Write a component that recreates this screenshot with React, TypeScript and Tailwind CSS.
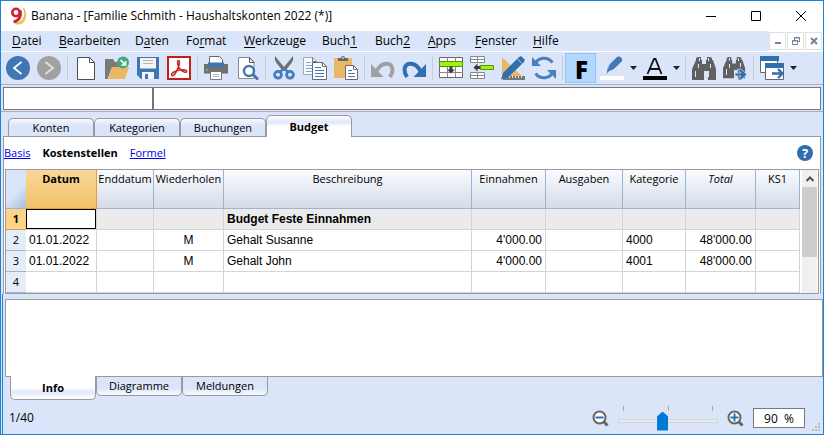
import type { ReactNode } from 'react';

const uiFont = "font-['Open_Sans','Noto_Sans',sans-serif]";
const gridFont = "font-['Liberation_Sans',Arial,sans-serif]";

/* ---------- toolbar icons, all on a 24 unit grid ---------- */

function Svg({ children }: { children: ReactNode }) {
  return (
    <svg width="24" height="24" viewBox="0 0 24 24" fill="none" aria-hidden="true" className="block shrink-0">
      {children}
    </svg>
  );
}

const BackIcon = () => (
  <Svg>
    <circle cx="12" cy="12" r="12" fill="#4076b3" />
    <path d="M15.500 6 8 12l7.500 6" stroke="#fff" strokeWidth="1.8" />
  </Svg>
);
const ForwardIcon = () => (
  <Svg>
    <circle cx="12" cy="12" r="12" fill="#a1a1a1" />
    <path d="M8.500 6 16 12l-7.500 6" stroke="#e3e3e3" strokeWidth="1.8" />
  </Svg>
);
const NewIcon = () => (
  <Svg>
    <path d="M3.500 1.500h12l5 5v17h-17z" fill="#fff" stroke="#4f4f4f" />
    <path d="M15.500 1.500v5h5" stroke="#4f4f4f" />
  </Svg>
);
const OpenIcon = () => (
  <Svg>
    <path d="M0 3h8l2 3h8v5H7L2.500 23H0z" fill="#7a7a7a" />
    <path d="M7 11h17l-4 12H3z" fill="#eab765" />
    <circle cx="18" cy="6.500" r="6" fill="#45a87d" />
    <path d="m15.500 4 4.500 4.500M20.500 5v4h-4" stroke="#fff" strokeWidth="1.7" />
  </Svg>
);
const SaveIcon = () => (
  <Svg>
    <path d="M1 1h22v22H5l-4-4z" fill="#4176b4" />
    <path d="M4 2h16v10.500H4z" fill="#f4f4f4" />
    <path d="M7 4.500h10M7 7.500h10" stroke="#b5b5b5" />
    <path d="M6 16h12v7H6z" fill="#f4f4f4" />
    <path d="M9 18h3v5H9z" fill="#4176b4" />
  </Svg>
);
const PdfIcon = () => (
  <Svg>
    <path d="M1 1h22v22H1z" fill="#fff" stroke="#c21f17" strokeWidth="2" />
    <path
      d="M5 19.500c-1.500-1 .5-3 3.500-4.200C11 14.200 15.500 13.500 18 14c2.500.5 2 2.500.2 2.200C14.500 15.600 11.800 12 11 9c-.7-2.600-.6-4.500.5-4.500s1.300 2 .5 4.700C11 12.800 7.500 20.700 5 19.500z"
      stroke="#c8241c"
      strokeWidth="1.5"
    />
  </Svg>
);
const PrintIcon = () => (
  <Svg>
    <path d="M0 8h24v9.500H0z" fill="#707070" />
    <path d="M5.500.5h10l3 3V8h-13z" fill="#fff" stroke="#666" />
    <path d="M4 6.500h16V11H4z" fill="#3f76b3" />
    <path d="M2 14h1.500" stroke="#ddd" />
    <path d="M6.500 15.500h11v8h-11z" fill="#fff" stroke="#777" />
    <path d="M9 18.500h6M9 20.500h6" stroke="#9cb9dc" />
  </Svg>
);
const PreviewIcon = () => (
  <Svg>
    <path d="M3.500 1.500h11l4.500 5v16H3.500z" fill="#fff" stroke="#8a8a8a" />
    <path d="M14.500 1.500v5H19z" fill="#fff" stroke="#555" />
    <circle cx="14" cy="15" r="5" fill="#fff" stroke="#4076b3" strokeWidth="2.4" />
    <path d="m18 18.500 5 5" stroke="#4076b3" strokeWidth="3" />
  </Svg>
);
const CutIcon = () => (
  <Svg>
    <path d="M3 0c-.5 3 0 5 1.500 7l6 7.500h3l6-7.500C21 5 21.500 3 21 0l-9 11z" fill="#707070" />
    <circle cx="6" cy="18.800" r="3.400" stroke="#3f7cc0" strokeWidth="2.8" />
    <circle cx="18" cy="18.800" r="3.400" stroke="#3f7cc0" strokeWidth="2.8" />
    <path d="M8 15.500 12 13l4 2.500" stroke="#3f7cc0" strokeWidth="2.5" />
  </Svg>
);
const CopyIcon = () => (
  <Svg>
    <path d="M.5 1.500h9l4 4v13H.5z" fill="#f7faff" stroke="#a9a9a9" />
    <path d="M9.500 1.500v4h4" stroke="#777" />
    <path d="M3 6.500h5M3 9.500h6M3 12.500h6M3 15.500h6" stroke="#7ea5d3" />
    <path d="M9.500 6.500h10l4 4v13h-14z" fill="#fff" stroke="#6b6b6b" />
    <path d="M19.500 6.500v4h4" stroke="#6b6b6b" />
    <path d="M12 11.500h6M12 14.500h9M12 17.500h9M12 20.500h9" stroke="#3f76b3" />
  </Svg>
);
const PasteIcon = () => (
  <Svg>
    <path d="M0 2h18v20H0z" fill="#eab765" />
    <path d="M4 2h3a2 2 0 0 1 4 0h3v3H4z" fill="#666" />
    <path d="M8 1.500h2v1H8z" fill="#fff" />
    <path d="M11.500 9.500h8l4 4v10h-12z" fill="#fff" stroke="#6b6b6b" />
    <path d="M19.500 9.500v4h4" stroke="#6b6b6b" />
    <path d="M14 14.500h4M14 17.500h7M14 20.500h7" stroke="#3f76b3" />
  </Svg>
);
const UndoIcon = () => (
  <Svg>
    <path d="M0 8v13h12.500z" fill="#a1a1a1" />
    <path d="M5 16C8 10 12 7.500 16 7.700c6 .3 7 7.300 3 13.300" stroke="#a1a1a1" strokeWidth="4" />
  </Svg>
);
const RedoIcon = () => (
  <Svg>
    <path d="M24 8v13H11.500z" fill="#2f6fb0" />
    <path d="M19 16C16 10 12 7.500 8 7.700c-6 .3-7 7.300-3 13.300" stroke="#2f6fb0" strokeWidth="4" />
  </Svg>
);
const AddRowIcon = () => (
  <Svg>
    <path d="M.5 1.500h23v20H.5z" fill="#fff" stroke="#666" />
    <path d="M8.500 1v20M16.500 1v20M0 16.500h24" stroke="#888" />
    <path d="M.5 5.500h23v5H.5z" fill="#9df50d" stroke="#5b8f0c" />
    <path d="M10.500 10.500h3v3H16l-4 4-4-4h2.500z" fill="#3c3c3c" />
  </Svg>
);
const InsertRowIcon = () => (
  <Svg>
    <path d="M.5.5h14v6H.5zM.5 16.500h14v6H.5z" fill="#fff" stroke="#888" />
    <path d="M7.500.5v6M0 3.500h15M7.500 16.500v6M0 19.500h15" stroke="#888" />
    <path d="M10.500 9.500h13v4h-13z" fill="#9df50d" stroke="#5b8f0c" />
    <path d="M10 10v3H7.500v2.500l-4-4 4-4V10z" fill="#3c3c3c" />
  </Svg>
);
const DesignIcon = () => (
  <Svg>
    <path d="M1 1v21h22z" fill="#eab765" />
    <path d="M6 12v5.500h6z" fill="#dbe5f9" />
    <path d="M2 20h22v4H2z" fill="#777" />
    <path d="M5.500 20v2M8.500 20v2M11.500 20v2M14.500 20v2M17.500 20v2M20.500 20v2" stroke="#dbe5f9" />
    <path d="M0 23.500 2 17 17.500 1.500 20 0l4 4-1.500 2.500L7 21.500z" fill="#2f6fb0" />
    <path d="m16.500 3 4.500 4.500" stroke="#dbe5f9" strokeWidth=".8" />
  </Svg>
);
const RefreshIcon = () => (
  <Svg>
    <path d="M3 9C5 1.500 15-.5 20.500 6.500" stroke="#4a80bc" strokeWidth="3" />
    <path d="M0 1v9h9z" fill="#4a80bc" />
    <path d="M21 15c-2 7.500-12 9.500-17.500 2.500" stroke="#4a80bc" strokeWidth="3" />
    <path d="M24 23v-9h-9z" fill="#4a80bc" />
  </Svg>
);
const PenIcon = () => (
  <Svg>
    <path d="M7 17c0-4 1-7 3-9l7-7c3-1.500 6 1 5 4l-7 7c-2 2-4 2-6 3z" fill="#4179b7" />
    <path d="M14 3.500 9.500 8l-2 5" stroke="#a8c3e2" />
    <path d="m6.500 17.500 3-3" stroke="#8a8a8a" />
    <path d="M0 20h24v4H0z" fill="#fff" />
  </Svg>
);
const ColorIcon = () => (
  <Svg>
    <path d="M4.500 18 11 3h1.500L18.500 18M7 13h9.500" stroke="#111" strokeWidth="1.8" />
    <path d="M0 20h24v4H0z" fill="#000" />
  </Svg>
);
const binoculars = 'M4 3V1l2-1h3v3h1v4h4V3h1V0h3l2 1v2h1l3 9v11h-8v-9h-4v9H0V12z';
const FindIcon = () => (
  <Svg>
    <path d={binoculars} fill="#606060" transform="translate(0 1)" />
    <path d="M7.500 2v3M16.500 2v3M3.500 15v6M16.500 15v6M6.500 8v4M18.500 8v4" stroke="#dbe5f9" />
  </Svg>
);
const FindNextIcon = () => (
  <Svg>
    <path d={binoculars} fill="#606060" transform="translate(0 1) scale(.92)" />
    <path d="M6.500 2v3M15.500 2v3M3.500 13v6M6.500 8v4M17.500 7v4" stroke="#dbe5f9" />
    <path d="M12 17h6l-3.500-4H18l6 5.500-6 5.500h-3.500l3.500-4h-6z" fill="#2f6fb0" stroke="#dbe5f9" strokeWidth=".7" />
  </Svg>
);
const WindowsIcon = () => (
  <Svg>
    <path d="M.5.5h17v16H.5z" fill="#fff" stroke="#666" />
    <path d="M0 0h19v5H0z" fill="#2f6fb0" />
    <path d="M5.500 7.500h18v16h-18z" fill="#fff" stroke="#666" />
    <path d="M5 7h19v5H5z" fill="#2f6fb0" />
    <path d="M12 17.500h10M18 13l4.500 4.500L18 22" stroke="#2f6fb0" strokeWidth="2.4" />
  </Svg>
);
const Magnifier = ({ plus = false }: { plus?: boolean }) => (
  <svg width="17" height="17" viewBox="0 0 17 17" fill="none" aria-hidden="true" className="block">
    <circle cx="7.500" cy="7.500" r="6" fill="#fff" stroke="#666" strokeWidth="2" />
    <path d="m11.500 11.500 4 4" stroke="#666" strokeWidth="3" />
    <path d={plus ? 'M3.500 7.500h8M7.500 3.500v8' : 'M3.500 7.500h8'} stroke="#2f6fb0" strokeWidth="2" />
  </svg>
);

/* ---------- toolbar ---------- */

function Tool({ label, children }: { label: string; children: ReactNode }) {
  return (
    <button type="button" aria-label={label} className="flex h-full w-[31px] items-center justify-center">
      {children}
    </button>
  );
}

function MenuTool({ label, children }: { label: string; children: ReactNode }) {
  return (
    <button type="button" aria-label={label} className="flex h-full w-[43px] items-center gap-1.5 pl-1">
      {children}
      <svg width="7" height="4" viewBox="0 0 7 4" aria-hidden="true">
        <path d="M0 0h7L3.500 4z" fill="#222" />
      </svg>
    </button>
  );
}

const Separator = () => (
  <div className="flex w-1.5 justify-center py-1">
    <div className="w-px bg-[#c8ccd4]" />
  </div>
);

function Toolbar() {
  return (
    <div className="flex h-[33px] items-stretch border-t border-white px-px">
      <Tool label="Zurück"><BackIcon /></Tool>
      <Tool label="Vorwärts"><ForwardIcon /></Tool>
      <Separator />
      <Tool label="Neu"><NewIcon /></Tool>
      <Tool label="Öffnen"><OpenIcon /></Tool>
      <Tool label="Speichern"><SaveIcon /></Tool>
      <Tool label="PDF"><PdfIcon /></Tool>
      <Separator />
      <Tool label="Drucken"><PrintIcon /></Tool>
      <Tool label="Seitenansicht"><PreviewIcon /></Tool>
      <Separator />
      <Tool label="Ausschneiden"><CutIcon /></Tool>
      <Tool label="Kopieren"><CopyIcon /></Tool>
      <Tool label="Einfügen"><PasteIcon /></Tool>
      <Separator />
      <Tool label="Rückgängig"><UndoIcon /></Tool>
      <Tool label="Wiederherstellen"><RedoIcon /></Tool>
      <Separator />
      <Tool label="Zeilen hinzufügen"><AddRowIcon /></Tool>
      <Tool label="Zeilen einfügen"><InsertRowIcon /></Tool>
      <Tool label="Spalten einrichten"><DesignIcon /></Tool>
      <Tool label="Neu berechnen"><RefreshIcon /></Tool>
      <Separator />
      <button
        type="button"
        aria-pressed="true"
        className="my-px flex w-[31px] items-center justify-center border border-[#8ac6fb] bg-[#b3d7fd] pt-1 pl-0.5 font-['Open_Sans',sans-serif] text-[24px] leading-none font-extrabold text-black"
      >
        F
      </button>
      <MenuTool label="Hintergrundfarbe"><PenIcon /></MenuTool>
      <MenuTool label="Textfarbe"><ColorIcon /></MenuTool>
      <Separator />
      <Tool label="Suchen"><FindIcon /></Tool>
      <Tool label="Weitersuchen"><FindNextIcon /></Tool>
      <Separator />
      <MenuTool label="Fenster"><WindowsIcon /></MenuTool>
    </div>
  );
}

/* ---------- title and menu ---------- */

function TitleBar() {
  const control = 'flex h-full w-[45px] items-center justify-center';
  return (
    <header className="flex h-[30px] items-center bg-white pl-[9px]">
      <svg width="16" height="18" viewBox="0 0 16 18" fill="none" aria-hidden="true">
        <path d="M13.500 1c3 6 1 13-8 15.500 3 1.500 8 .5 9.500-4.500 1-4 .5-8-1.500-11z" fill="#f3d548" stroke="#c9a53a" strokeWidth=".6" />
        <circle cx="6" cy="5.500" r="3.700" stroke="#cf1f33" strokeWidth="2.6" />
        <path d="M10.300 3.500c1 5-.5 10-6.800 11.500" stroke="#cf1f33" strokeWidth="2.8" />
      </svg>
      <h1 className="flex-1 pl-[5px] text-[12px] leading-4 text-black">
        Banana - [Familie Schmith - Haushaltskonten 2022 (*)]
      </h1>
      <button type="button" aria-label="Minimieren" className={control}>
        <svg width="10" height="10" viewBox="0 0 10 10"><path d="M0 5.500h10" stroke="#000" /></svg>
      </button>
      <button type="button" aria-label="Maximieren" className={control}>
        <svg width="10" height="10" viewBox="0 0 10 10" fill="none"><path d="M.5.5h9v9h-9z" stroke="#000" /></svg>
      </button>
      <button type="button" aria-label="Schliessen" className={control}>
        <svg width="10" height="10" viewBox="0 0 10 10"><path d="m0 0 10 10M10 0 0 10" stroke="#000" /></svg>
      </button>
    </header>
  );
}

const menus: [string, string, string][] = [
  ['', 'D', 'atei'],
  ['', 'B', 'earbeiten'],
  ['D', 'a', 'ten'],
  ['Fo', 'r', 'mat'],
  ['', 'W', 'erkzeuge'],
  ['Buch', '1', ''],
  ['Buch', '2', ''],
  ['', 'A', 'pps'],
  ['', 'F', 'enster'],
  ['', 'H', 'ilfe'],
];

function MenuBar() {
  const mdi = 'flex h-[18px] w-[17px] items-center justify-center border border-[#e0e0e0] bg-white';
  return (
    <nav className="flex h-5 items-center">
      <div className="grid flex-1 grid-cols-[47px_76px_51px_58px_78px_53px_53px_47px_58px_40px] pl-[11px]">
        {menus.map(([before, key, after]) => (
          <button key={before + key + after} type="button" className="text-left text-[12px] leading-4 whitespace-nowrap">
            {before}
            <span className="underline underline-offset-2">{key}</span>
            {after}
          </button>
        ))}
      </div>
      <div className="flex h-full items-center gap-px bg-white pr-px">
        <button type="button" aria-label="Dokument minimieren" className={mdi}>
          <svg width="8" height="8" viewBox="0 0 8 8"><path d="M1 6h6" stroke="#758494" strokeWidth="2" /></svg>
        </button>
        <button type="button" aria-label="Dokument wiederherstellen" className={mdi}>
          <svg width="8" height="8" viewBox="0 0 8 8" fill="none" stroke="#758494">
            <path d="M.5 3.500h5v4h-5zM0 4h6M2.500 3V.5h5v4H6M2 1h6" />
          </svg>
        </button>
        <button type="button" aria-label="Dokument schliessen" className={mdi}>
          <svg width="8" height="8" viewBox="0 0 8 8"><path d="m1 1 6 6M7 1 1 7" stroke="#758494" strokeWidth="2" /></svg>
        </button>
      </div>
    </nav>
  );
}

/* ---------- tabs ---------- */

function TopTabs() {
  const idle =
    'h-[18px] w-[86px] rounded-t-[5px] border border-b-0 border-[#9a9a9a] bg-linear-to-b from-[#f6f9ff] to-[#dbe5f9] to-40%';
  return (
    <div role="tablist" className="flex h-6 items-end pl-[7px] text-[11px] leading-4">
      {['Konten', 'Kategorien', 'Buchungen'].map((t) => (
        <button key={t} type="button" role="tab" aria-selected="false" className={idle}>
          {t}
        </button>
      ))}
      <button
        type="button"
        role="tab"
        aria-selected="true"
        className="relative -mb-px h-[22px] w-[86px] rounded-t-[5px] border border-b-0 border-[#9a9a9a] bg-linear-to-b from-white via-[#dfe8fa] via-30% to-white to-50% font-bold"
      >
        Budget
      </button>
    </div>
  );
}

function BottomTabs() {
  const idle =
    'h-[19px] w-[86px] rounded-b-[5px] border border-t-0 border-[#9a9a9a] bg-linear-to-t from-[#f6f9ff] to-[#dbe5f9] to-40%';
  return (
    <div role="tablist" className="flex h-[23px] items-start pl-[5px] text-[11px] leading-4">
      <button
        type="button"
        role="tab"
        aria-selected="true"
        className="relative -mt-px h-6 w-[86px] rounded-b-[5px] border border-t-0 border-[#9a9a9a] bg-linear-to-t from-white via-[#dfe8fa] via-30% to-white to-50% font-bold"
      >
        Info
      </button>
      {['Diagramme', 'Meldungen'].map((t) => (
        <button key={t} type="button" role="tab" aria-selected="false" className={idle}>
          {t}
        </button>
      ))}
    </div>
  );
}

/* ---------- budget table ---------- */

const columns = ['Datum', 'Enddatum', 'Wiederholen', 'Beschreibung', 'Einnahmen', 'Ausgaben', 'Kategorie', 'Total', 'KS1'];

const entries = [
  { nr: 2, cells: ['01.01.2022', '', 'M', 'Gehalt Susanne', "4'000.00", '', '4000', "48'000.00", ''] },
  { nr: 3, cells: ['01.01.2022', '', 'M', 'Gehalt John', "4'000.00", '', '4001', "48'000.00", ''] },
  { nr: 4, cells: ['', '', '', '', '', '', '', '', ''] },
];

const align = ['text-left', 'text-left', 'text-center', 'text-left', 'text-right', 'text-right', 'text-left', 'text-right', 'text-left'];

function BudgetTable() {
  return (
    <table className="w-full table-fixed border-separate border-spacing-0 text-[12px] leading-4 text-black">
      <colgroup>
        <col className="w-5" />
        <col className="w-[71px]" />
        <col className="w-[57px]" />
        <col className="w-[70px]" />
        <col />
        <col className="w-[74px]" />
        <col className="w-[77px]" />
        <col className="w-[63px]" />
        <col className="w-[70px]" />
        <col className="w-11" />
      </colgroup>
      <thead>
        <tr className="h-[39px] text-[11px]">
          <td className="border-b border-[#9db5d2] bg-linear-135 from-[#dbe5f9] from-55% to-[#a9bfdc] p-0" />
          {columns.map((c) => (
            <th
              key={c}
              scope="col"
              className={
                c === 'Datum'
                  ? 'border-r border-b border-[#f0963c] bg-linear-to-b from-[#f8d899] to-[#f2c169] p-0 pt-px align-top font-bold'
                  : c === 'Total'
                    ? 'border-r border-b border-[#9db5d2] bg-linear-to-b from-[#f9fcfe] to-[#d4dce9] p-0 pt-px align-top font-normal italic'
                    : 'border-r border-b border-[#9db5d2] bg-linear-to-b from-[#f9fcfe] to-[#d4dce9] p-0 pt-px align-top font-normal'
              }
            >
              {c}
            </th>
          ))}
        </tr>
      </thead>
      <tbody className={gridFont}>
        <tr className="h-[21px] font-bold">
          <th scope="row" className={`${uiFont} border-b border-[#f0963c] bg-[#fdd38a] p-0 text-[11px]`}>1</th>
          <td className="border-r border-b border-[#d4d4d4] bg-white p-0 align-top">
            <input aria-label="Datum, Zeile 1" className="block h-5 w-full border border-black bg-white px-0.5 outline-none" />
          </td>
          {['', '', 'Budget Feste Einnahmen', '', '', '', '', ''].map((v, i) => (
            <td key={i} className="border-r border-b border-[#d4d4d4] bg-[#ebebeb] p-0 pl-[3px] whitespace-nowrap">
              {v}
            </td>
          ))}
        </tr>
        {entries.map((row) => (
          <tr key={row.nr} className="h-[21px]">
            <th scope="row" className={`${uiFont} border-b border-[#9db5d2] bg-[#e5edf8] p-0 text-[11px] font-normal`}>
              {row.nr}
            </th>
            {row.cells.map((v, i) => (
              <td key={i} className={`${align[i]} border-r border-b border-[#d4d4d4] bg-white px-[3px] py-0 whitespace-nowrap`}>
                {v}
              </td>
            ))}
          </tr>
        ))}
      </tbody>
    </table>
  );
}

function ScrollBar() {
  return (
    <div className="ml-0.5 flex w-[15px] flex-col bg-[#f0f0f0]">
      <button type="button" aria-label="Nach oben" className="flex h-[17px] items-center justify-center">
        <svg width="8" height="6" viewBox="0 0 8 6" fill="none"><path d="m.5 5 3.500-3.500L7.500 5" stroke="#505050" strokeWidth="2" /></svg>
      </button>
      <div className="h-[70px] bg-[#cdcdcd]" />
    </div>
  );
}

/* ---------- status bar ---------- */

function StatusBar() {
  return (
    <footer className="flex h-[34px] items-center pt-0.5 pr-0.5 pl-1 text-[11px] leading-4">
      <span className="flex-1 text-[12px]">1/40</span>
      <button type="button" aria-label="Verkleinern"><Magnifier /></button>
      <div className="mx-[9px] flex w-[100px] flex-col">
        <div className="flex h-[5px] justify-between px-[5px]">
          <span className="w-px bg-[#a8a8a8]" />
          <span className="w-px bg-[#a8a8a8]" />
          <span className="w-px bg-[#a8a8a8]" />
        </div>
        <input
          type="range"
          aria-label="Zoom"
          min={20}
          max={180}
          defaultValue={90}
          className="h-[19px] w-full appearance-none bg-transparent [&::-webkit-slider-runnable-track]:h-1 [&::-webkit-slider-runnable-track]:border [&::-webkit-slider-runnable-track]:border-[#d6d6d6] [&::-webkit-slider-runnable-track]:bg-[#e7eaea] [&::-webkit-slider-thumb]:-mt-2 [&::-webkit-slider-thumb]:h-[19px] [&::-webkit-slider-thumb]:w-[11px] [&::-webkit-slider-thumb]:appearance-none [&::-webkit-slider-thumb]:bg-[#0078d7] [&::-webkit-slider-thumb]:[clip-path:polygon(50%_0,100%_5px,100%_100%,0_100%,0_5px)]"
        />
      </div>
      <button type="button" aria-label="Vergrössern"><Magnifier plus /></button>
      <input
        aria-label="Zoomfaktor"
        defaultValue="90  %"
        className="ml-[9px] h-5 w-[52px] border border-[#7a7a7a] bg-white text-center text-[12px] whitespace-pre outline-none"
      />
      <svg width="9" height="9" viewBox="0 0 9 9" fill="#bdbdbd" aria-hidden="true" className="mb-0.5 ml-[7px] self-end">
        <path d="M6 0h2v2H6zM3 3h2v2H3zM6 3h2v2H6zM0 6h2v2H0zM3 6h2v2H3zM6 6h2v2H6z" />
      </svg>
    </footer>
  );
}

export default function App() {
  return (
    <div className={`${uiFont} flex h-screen min-h-[400px] flex-col border border-[#1883d7] bg-[#dbe5f9] text-black`}>
      <TitleBar />
      <MenuBar />
      <Toolbar />
      <div className="flex flex-col border-t border-b border-[#b0b0b0] px-0.5 pt-0.5 pb-px">
        <div className="flex h-[23px] border border-[#70788a] bg-white">
          <input aria-label="Zelle" className="w-[150px] border-r-2 border-[#757575] px-1 outline-none" />
          <input aria-label="Inhalt" className="min-w-0 flex-1 px-1 outline-none" />
        </div>
      </div>
      <TopTabs />
      <main className="mx-0.5 border border-b-0 border-[#9a9a9a] bg-white">
        <div className="flex h-8 items-center gap-3 text-[11px] leading-4">
          <a href="#basis" className="text-[#0000ee] underline">Basis</a>
          <span className="font-bold">Kostenstellen</span>
          <a href="#formel" className="text-[#0000ee] underline">Formel</a>
          <button type="button" aria-label="Hilfe" className="mr-[7px] ml-auto size-4 rounded-full bg-[#2f6fb0] text-[13px] leading-4 font-bold text-white">
            ?
          </button>
        </div>
        <div className="mx-px flex border border-[#9a9a9a] pr-px">
          <div className="min-w-0 flex-1">
            <BudgetTable />
          </div>
          <ScrollBar />
        </div>
      </main>
      <div className="ml-px flex flex-1 flex-col border-l border-[#1883d7] pt-[5px] pl-0.5">
        <section aria-label="Info" className="flex-1 border border-[#9a9a9a] bg-white" />
        <BottomTabs />
        <StatusBar />
      </div>
    </div>
  );
}
